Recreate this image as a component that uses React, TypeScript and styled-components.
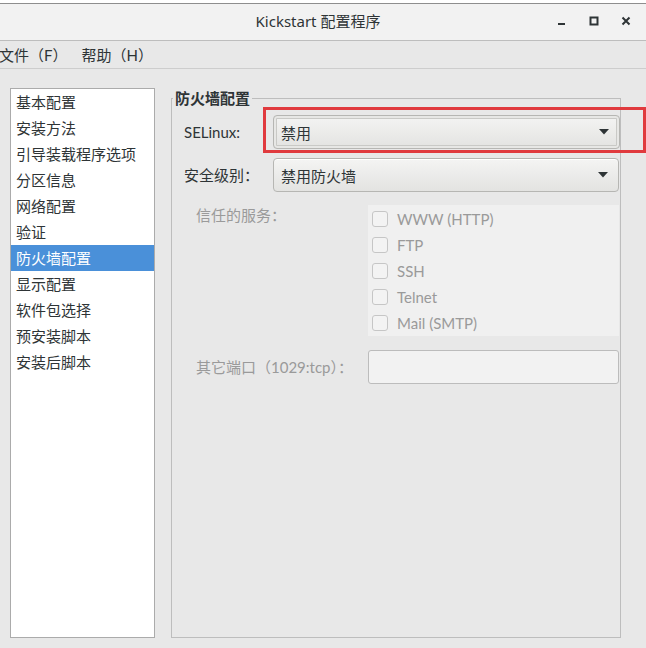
import React from "react";
import styled, { createGlobalStyle } from "styled-components";

const Global = createGlobalStyle`
  html, body { margin: 0; padding: 0; background: #ffffff; }
  body { font-family: Lato, "Noto Sans CJK SC", sans-serif; font-size: 15px; color: #2e3436; }
  * { box-sizing: border-box; }
`;

const Window = styled.div`
  width: 646px;
  height: 648px;
  display: flex;
  flex-direction: column;
  background: #e8e8e8;
  padding-top: 3px;
  background-clip: content-box;
  overflow: hidden;
`;

const TitleBar = styled.div`
  height: 38px;
  flex: none;
  display: flex;
  align-items: center;
  padding-bottom: 3px;
  background: #f2f2f2;
  border-top: 1px solid #8e8e8e;
  border-bottom: 1px solid #bdbdbd;
  position: relative;
`;

const Title = styled.div`
  flex: 1;
  text-align: center;
  font-size: 15px;
  color: #2e3436;
  padding-right: 10px;
  font-family: "Noto Sans", "Noto Sans CJK SC", sans-serif;
`;

const Controls = styled.div`
  position: absolute;
  right: 4px;
  top: 0;
  height: 100%;
  display: flex;
  align-items: center;
  padding-bottom: 2px;
`;

const CtrlBtn = styled.div`
  width: 32px;
  height: 24px;
  display: flex;
  align-items: center;
  justify-content: center;
`;

const MenuBar = styled.div`
  height: 28px;
  flex: none;
  display: flex;
  align-items: center;
  gap: 14px;
  border-bottom: 1px solid #cdcdcd;
  background: #e8e8e8;
`;

const MenuItem = styled.span<{ $first?: boolean }>`
  margin-left: ${(p) => (p.$first ? "-1px" : "0")};
  color: #2e3436;
`;

const Body = styled.div`
  flex: 1;
  display: flex;
  align-items: stretch;
  gap: 16px;
  padding: 19px 25px 10px 10px;
  min-height: 0;
`;

const List = styled.div`
  width: 145px;
  flex: none;
  background: #ffffff;
  border: 1px solid #ababab;
  display: flex;
  flex-direction: column;
`;

const ListRow = styled.div<{ $selected?: boolean }>`
  height: 26px;
  line-height: 26px;
  padding-left: 5px;
  color: ${(p) => (p.$selected ? "#ffffff" : "#2e3436")};
  background: ${(p) => (p.$selected ? "#4a90d9" : "transparent")};
`;

const Frame = styled.fieldset`
  flex: 1;
  margin: 0;
  padding: 7px 1px 0 12px;
  border: 1px solid #bdbdbd;
  min-width: 0;
`;

const Legend = styled.legend`
  font-weight: bold;
  padding: 0 2px;
  margin-left: -11px;
  line-height: 20px;
  color: #2e3436;
`;

const FormGrid = styled.div`
  display: flex;
  flex-direction: column;
`;

const Row = styled.div<{ $gap: number }>`
  display: flex;
  align-items: center;
  margin-bottom: ${(p) => p.$gap}px;
`;

const TopRow = styled.div<{ $gap: number }>`
  display: flex;
  align-items: flex-start;
  margin-bottom: ${(p) => p.$gap}px;
`;

const Label = styled.div<{ $width: number; $indent?: number; $disabled?: boolean }>`
  width: ${(p) => p.$width}px;
  flex: none;
  padding-left: ${(p) => p.$indent ?? 0}px;
  color: ${(p) => (p.$disabled ? "#9a9a9a" : "#2e3436")};
  line-height: 20px;
  white-space: nowrap;
`;

const SelectWrap = styled.div`
  position: relative;
`;

const Select = styled.div<{ $focused?: boolean }>`
  width: 347px;
  height: 34px;
  border: 1px solid #b6b6b3;
  border-radius: 4px;
  background: linear-gradient(#f4f4f3, #e3e3e1);
  display: flex;
  align-items: center;
  justify-content: space-between;
  padding: 0 10px 0 7px;
  color: #2e3436;
  box-shadow: ${(p) => (p.$focused ? "inset 0 0 0 2px #e7e7e5, inset 0 0 0 3px #c9c9c6" : "inset 0 1px #ffffff")};
`;

const Highlight = styled.div`
  position: absolute;
  left: -10px;
  top: -8px;
  width: 383px;
  height: 46px;
  border: 3px solid #e03a3e;
  pointer-events: none;
`;

const Services = styled.div`
  width: 252px;
  background: #f0f0f0;
  display: flex;
  flex-direction: column;
  padding: 1px 0 0 4px;
`;

const ServiceRow = styled.div`
  height: 26px;
  display: flex;
  align-items: center;
  gap: 9px;
  color: #9a9a9a;
`;

const Check = styled.span`
  width: 16px;
  height: 16px;
  border: 1px solid #c6c6c6;
  border-radius: 3px;
  background: #f3f3f3;
  flex: none;
`;

const Entry = styled.div`
  width: 251px;
  height: 34px;
  border: 1px solid #bcbcbc;
  border-radius: 3px;
  background: #f2f2f2;
`;

const Arrow = () => (
  <svg width="10" height="6" viewBox="0 0 10 6">
    <path d="M0 0 H10 L5 5.5 Z" fill="#2e3436" />
  </svg>
);

const sections = [
  "基本配置",
  "安装方法",
  "引导装载程序选项",
  "分区信息",
  "网络配置",
  "验证",
  "防火墙配置",
  "显示配置",
  "软件包选择",
  "预安装脚本",
  "安装后脚本",
];

const services = ["WWW (HTTP)", "FTP", "SSH", "Telnet", "Mail (SMTP)"];

export default function App() {
  return (
    <>
      <Global />
      <Window>
        <TitleBar>
          <Title>Kickstart 配置程序</Title>
          <Controls>
            <CtrlBtn>
              <svg width="10" height="10" viewBox="0 0 10 10">
                <rect x="1" y="7" width="7" height="2" fill="#2e3436" />
              </svg>
            </CtrlBtn>
            <CtrlBtn>
              <svg width="10" height="10" viewBox="0 0 10 10">
                <rect x="1.5" y="1.5" width="7" height="7" fill="none" stroke="#2e3436" strokeWidth="2" />
              </svg>
            </CtrlBtn>
            <CtrlBtn>
              <svg width="10" height="10" viewBox="0 0 10 10">
                <path d="M1.5 1.5 L8.5 8.5 M8.5 1.5 L1.5 8.5" stroke="#2e3436" strokeWidth="2" />
              </svg>
            </CtrlBtn>
          </Controls>
        </TitleBar>
        <MenuBar>
          <MenuItem $first>文件（F）</MenuItem>
          <MenuItem>帮助（H）</MenuItem>
        </MenuBar>
        <Body>
          <List>
            {sections.map((s) => (
              <ListRow key={s} $selected={s === "防火墙配置"}>
                {s}
              </ListRow>
            ))}
          </List>
          <Frame>
            <Legend>防火墙配置</Legend>
            <FormGrid>
              <Row $gap={9}>
                <Label $width={89}>SELinux:</Label>
                <SelectWrap>
                  <Select $focused>
                    <span>禁用</span>
                    <Arrow />
                  </Select>
                  <Highlight />
                </SelectWrap>
              </Row>
              <Row $gap={13}>
                <Label $width={89}>安全级别：</Label>
                <Select>
                  <span>禁用防火墙</span>
                  <Arrow />
                </Select>
              </Row>
              <TopRow $gap={14}>
                <Label $width={184} $indent={12} $disabled>
                  信任的服务：
                </Label>
                <Services>
                  {services.map((s) => (
                    <ServiceRow key={s}>
                      <Check />
                      <span>{s}</span>
                    </ServiceRow>
                  ))}
                </Services>
              </TopRow>
              <Row $gap={0}>
                <Label $width={184} $indent={12} $disabled>
                  其它端口（1029:tcp）：
                </Label>
                <Entry />
              </Row>
            </FormGrid>
          </Frame>
        </Body>
      </Window>
    </>
  );
}
